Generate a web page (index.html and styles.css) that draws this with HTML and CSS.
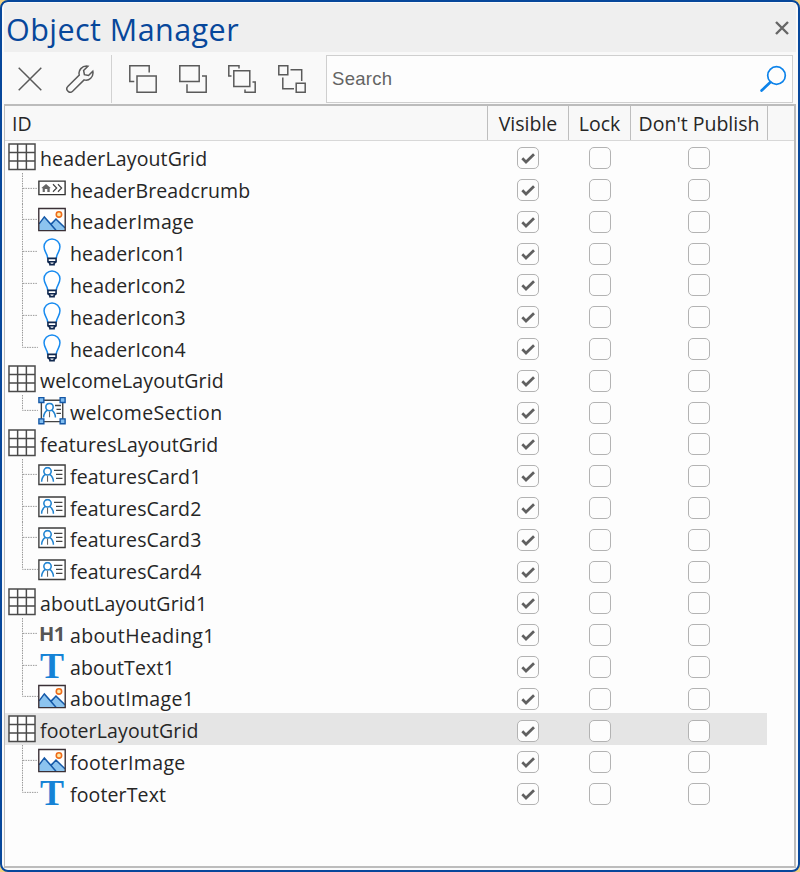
FILE: index.html
```html
<!DOCTYPE html>
<html lang="en">
<head>
<meta charset="utf-8">
<title>Object Manager</title>
<link rel="stylesheet" href="styles.css">
</head>
<body>
<svg class="defs" aria-hidden="true">
  <symbol id="grid" viewBox="0 0 28 32"><path d="M.9 3h26.2v25.8H.9zM9.6 3v26M18.4 3v26M1 11.6h26M1 20.2h26" fill="#fff" stroke="#4b4b4b" stroke-width="1.5"/></symbol>
  <symbol id="crumb" viewBox="0 0 28 32"><path d="M.8 8.2h26.4v13.6H.8z" fill="#fff" stroke="#333" stroke-width="1.4"/><path d="M3.3 15.2 8 11l4.7 4.2-1 .2V19H9.3v-3H6.8v3H4.6v-3.6z" fill="#666"/><path d="m15 11.3 3.7 3.8L15 18.9M20 11.3l3.7 3.8-3.7 3.8" fill="none" stroke="#444" stroke-width="1.2"/></symbol>
  <symbol id="image" viewBox="0 0 28 32"><path d="M.7 4.5h26.6v22.3H.7z" fill="#fff"/><path d="M1 20.5 6.5 13l6.3 6.2 4.8-3.6 9.4 8.4v2.5H1z" fill="#8cc4ef"/><path d="m1 20 5.3-7L18 26.5M13 20.5l5-5.3 9 8.7" fill="none" stroke="#1559a8" stroke-width="1.5"/><circle cx="21" cy="10.5" r="2.7" fill="#ffe9a8" stroke="#ef6c1a" stroke-width="1.6"/><path d="M.7 4.5h26.6v22.3H.7z" fill="none" stroke="#3a3036" stroke-width="1.4"/></symbol>
  <symbol id="bulb" viewBox="0 0 28 32"><path d="M9.7 22.5C9.5 17.7 6 16 6 10.9a8 8 0 0 1 16 0c0 5.1-3.5 6.8-3.7 11.6" fill="#fff" stroke="#188bf0" stroke-width="1.5"/><path d="M9.9 22.5h8.2v3.6l-2 1.4v1.3h-4.2v-1.3l-2-1.4zM10 25.9h8" fill="#fff" stroke="#10284f" stroke-width="1.6"/></symbol>
  <symbol id="person" viewBox="0 0 14 16"><circle cx="7" cy="4.6" r="3.7" fill="none" stroke="#2385d2" stroke-width="1.6"/><path d="M1 15.2c.1-4 1.7-6 3.8-7.5M13 15.2c-.1-4-1.7-6-3.8-7.5" fill="none" stroke="#2385d2" stroke-width="1.6"/><path d="M7 9v6" stroke="#666" stroke-width="1.1"/></symbol>
  <symbol id="card" viewBox="0 0 28 32"><path d="M.8 6h26.4v19.6H.8z" fill="#fff" stroke="#3d3d3d" stroke-width="1.4"/><use href="#person" x="2.5" y="7.8" width="14" height="16"/><path d="M16 11.5h8.5M18 15.5h6.5M18 19.5h6.5" stroke="#444" stroke-width="1.4"/></symbol>
  <symbol id="section" viewBox="0 0 28 32"><path d="M3.3 5.3h21.5v21.5H3.3z" fill="#fff" stroke="#444" stroke-width="1.4"/><use href="#person" x="4.5" y="7.5" width="14" height="16"/><path d="M17 10.5h6M18.5 14.5h4.5M18.5 18.5h4.5" stroke="#444" stroke-width="1.4"/><path d="M.8 2.6h5v5h-5zM22.2 2.6h5v5h-5zM.8 24h5v5h-5zM22.2 24h5v5h-5z" fill="#80bdf0" stroke="#1558a6" stroke-width="1.4"/></symbol>
  <symbol id="branch" viewBox="0 0 33 32"><path d="M17.5 0v32M18 15.5h15"/></symbol>
  <symbol id="branch-end" viewBox="0 0 33 32"><path d="M17.5 0v15.5h15.5"/></symbol>
</svg>
<main class="window">
  <header class="titlebar">
    <h1 class="title">Object Manager</h1>
    <svg class="close" viewBox="0 0 14 14"><path d="m1 1 12 12M13 1 1 13"/></svg>
  </header>
  <div class="toolbar">
    <div class="tools">
      <svg class="tool delete" viewBox="0 0 28 28"><path d="m2.7 2.7 22.6 22.6M25.3 2.7 2.7 25.3"/></svg>
      <svg class="tool wrench" viewBox="0 0 28 28"><path d="m2 21.2 11.3-11.1C11.9 5.5 16 .4 21.9 1.2L17.6 5.5l.8 4.2 4.1.8 4.3-4.3c1.2 5.6-3.9 10.3-8.7 8.7L6.6 26.2C3.2 29.3-1.3 24.5 2 21.2z"/></svg>
    </div>
    <div class="tools arrange">
      <svg class="tool" viewBox="0 0 28 28"><path d="M20.2 7.5V.8H.8v15.7h4.5M8 11h19.2v16.2H8z"/></svg>
      <svg class="tool" viewBox="0 0 28 28"><path d="M.8.8h19.4v15.7H.8zM23 11h4.2v16.2H8v-8"/></svg>
      <svg class="tool" viewBox="0 0 28 28"><path d="M5.8 5.8h16v15.8h-16zM11 3.5V.8H.8V11h2.7M24.5 17h2.7v10.2H17v-2.7"/></svg>
      <svg class="tool" viewBox="0 0 28 28"><path d="M.8.8h9v9h-9zM18.2 18.2h9v9h-9zM12.5 4.8h11.2v11.2M4.8 12.5v11.2h11.2"/></svg>
    </div>
    <div class="search">
      <span>Search</span>
      <svg class="lens" viewBox="0 0 28 28"><circle cx="17.5" cy="10.5" r="8.8"/><path d="m11.3 17.3-8.7 8.2"/></svg>
    </div>
  </div>
  <section class="table">
    <div class="row head">
      <span class="name">ID</span><span>Visible</span><span>Lock</span><span>Don't Publish</span><span></span>
    </div>
    <div id="rows"></div>
  </section>
</main>
<script src="rows.js"></script>
</body>
</html>
```
FILE: rows.js
```js
const groups = [
  ["headerLayoutGrid", [["crumb", "headerBreadcrumb"], ["image", "headerImage"], ["bulb", "headerIcon1"], ["bulb", "headerIcon2"], ["bulb", "headerIcon3"], ["bulb", "headerIcon4"]]],
  ["welcomeLayoutGrid", [["section", "welcomeSection"]]],
  ["featuresLayoutGrid", [["card", "featuresCard1"], ["card", "featuresCard2"], ["card", "featuresCard3"], ["card", "featuresCard4"]]],
  ["aboutLayoutGrid1", [["heading", "aboutHeading1"], ["text", "aboutText1"], ["image", "aboutImage1"]]],
  ["footerLayoutGrid", [["image", "footerImage"], ["text", "footerText"]]]
];
const glyphs = { heading: "H1", text: "T" };
const boxes = '<span><i class="box"><svg viewBox="0 0 22 22"><path d="m5.3 11.3 3.7 3.7 8-7.8"/></svg></i></span><span><i class="box"></i></span><span><i class="box"></i></span>';
const mark = icon => glyphs[icon]
  ? `<b class="icon ${icon}">${glyphs[icon]}</b>`
  : `<svg class="icon"><use href="#${icon}"/></svg>`;
const row = (icon, label, cls, tree) =>
  `<div class="row ${cls}"><div class="name">${tree}${mark(icon)}<span class="label">${label}</span></div>${boxes}</div>`;
document.getElementById("rows").innerHTML = groups.map(([name, items]) =>
  row("grid", name, name === "footerLayoutGrid" ? "parent selected" : "parent", "") +
  items.map(([icon, label], i) => row(icon, label, `child of-${icon}`,
    `<svg class="tree"><use href="#branch${i === items.length - 1 ? "-end" : ""}"/></svg>`)).join("")
).join("");
```
FILE: styles.css
```css
* { box-sizing: border-box; }
body { margin: 0; background: #f3d17f; font-family: "Open Sans", "Noto Sans", sans-serif; color: #262626; }
.defs { position: absolute; width: 0; height: 0; }
.window { width: 800px; height: 872px; padding: 1px 2px 2px; border: 2px solid #07479b; border-radius: 8px; background: #fafafa; display: flex; flex-direction: column; overflow: hidden; }
.titlebar { height: 49px; flex: none; display: flex; align-items: center; justify-content: space-between; background: #efefef; padding: 0 7px 0 2px; }
.title { margin: 0; font-size: 30.5px; line-height: 49px; font-weight: 400; color: #07479b; letter-spacing: .45px; padding-top: 3px; }
.close { width: 14px; height: 14px; fill: none; stroke: #666; stroke-width: 2.4; }
.toolbar { height: 52px; flex: none; display: flex; align-items: center; background: #f9f9f9; padding: 2px 3px 0 0; }
.tools { display: flex; height: 48px; align-items: center; gap: 22px; padding-left: 12px; width: 108px; border-right: 1px solid #d2d2d2; }
.arrange { width: 214px; padding-left: 17px; border: 0; gap: 21.5px; }
.tool { width: 28px; height: 28px; flex: none; fill: none; stroke: #5a5a5a; stroke-width: 1.5; }
.search { flex: 1; height: 48px; border: 1px solid #cfcfcf; background: #fdfdfd; display: flex; justify-content: space-between; align-items: center; padding: 0 5px; font-family: "Liberation Sans", sans-serif; font-size: 18.5px; letter-spacing: .3px; color: #646464; }
.lens { width: 28px; height: 28px; fill: none; stroke: #0d83ea; stroke-width: 1.7; }
.lens path { stroke-width: 2.7; stroke-linecap: round; }
.table { flex: 1; border: 1px solid #bcbcbc; border-width: 2px 2px 2px 1px; background: #fdfdfd; }
.row { display: grid; grid-template-columns: 483px 81px 62px 137px 1fr; height: 31.8px; width: 762px; }
.row > span { display: flex; justify-content: center; align-items: center; padding-right: 1px; }
.head { height: 34.8px; width: auto; background: #f8f8f8; border-bottom: 1px solid #d8d8d8; font-size: 19.5px; }
.head > span { border-right: 1px solid #bebebe; white-space: nowrap; padding: 2px 0 0; }
.head > span:last-child { border: 0; }
.head > .name { justify-content: flex-start; padding-left: 7px; }
.row > .name { display: flex; }
.parent > .name { padding-left: 3px; }
.icon { width: 28px; height: 31.8px; flex: none; margin-right: 4px; }
.tree { width: 33px; height: 31.8px; flex: none; fill: none; stroke: #999; stroke-width: 1; stroke-dasharray: 1.5 1; }
.label { font-size: 19.5px; line-height: 35px; letter-spacing: .14px; white-space: nowrap; }
.of-section .label, .of-heading .label, .of-image .label { letter-spacing: .35px; }
.selected { background: #e5e5e5; }
.box { width: 22px; height: 22px; border: 1.5px solid #b3b3b3; border-radius: 5px; background: #fdfdfd; display: flex; }
.box svg { width: 22px; height: 22px; margin: -1px; flex: none; fill: none; stroke: #606060; stroke-width: 2.7; }
.heading { font: bold 20px/31px "Open Sans", sans-serif; letter-spacing: -.5px; padding-left: 1px; color: #555; white-space: nowrap; }
.text { font: bold 36px/33px "Liberation Serif", serif; padding-left: 2px; color: #1583d6; }
```
